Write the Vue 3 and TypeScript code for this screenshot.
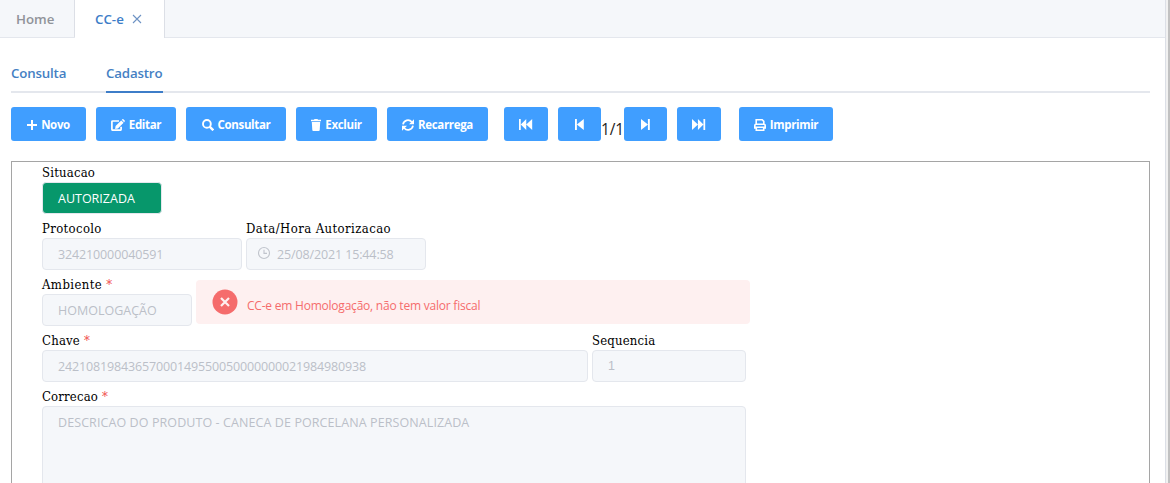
<script setup lang="ts">
interface Action {
  id: string
  label?: string
  icon: string
}

const edit: Action[] = [
  { id: 'novo', label: 'Novo', icon: 'plus' },
  { id: 'editar', label: 'Editar', icon: 'edit' },
  { id: 'consultar', label: 'Consultar', icon: 'search' },
  { id: 'excluir', label: 'Excluir', icon: 'trash' },
  { id: 'recarrega', label: 'Recarrega', icon: 'refresh' },
]
</script>

<template>
  <div class="window">
    <div class="page">
      <nav class="tabs">
        <div class="tab home"><span class="t-home">Home</span></div>
        <div class="tab active">
          <span class="t-cce">CC-e</span>
          <svg class="close" viewBox="0 0 10 10"><path d="M1 1l8 8M9 1l-8 8" /></svg>
        </div>
      </nav>
      <main class="content">
        <div class="subtabs">
          <div class="subtab consulta"><span>Consulta</span></div>
          <div class="subtab cadastro"><span>Cadastro</span></div>
        </div>
        <div class="toolbar">
          <button v-for="a in edit" :key="a.id" class="btn" :class="a.id">
            <svg v-if="a.icon === 'plus'" class="ico" viewBox="0 0 10 12"><path d="M5 1v10M0 6h10" fill="none" stroke="currentColor" stroke-width="2" /></svg>
            <svg v-else-if="a.icon === 'edit'" class="ico" viewBox="0 0 14 12">
              <path d="M8 2H1.8Q.9 2 .9 2.9v7.4q0 .9.9.9h7.4q.9 0 .9-.9V7.8" fill="none" stroke="currentColor" stroke-width="1.7" />
              <path d="M10.2 1.4l2.4 2.4-5.7 5.6-2.8.5.5-2.8zM10.8.8l.6-.5q.5-.4 1 0l1.3 1.3q.4.5 0 1l-.6.6z" fill="currentColor" />
            </svg>
            <svg v-else-if="a.icon === 'search'" class="ico" viewBox="0 0 12 12"><circle cx="4.9" cy="4.9" r="3.9" fill="none" stroke="currentColor" stroke-width="1.9" /><path d="M7.7 7.7l3.6 3.6" stroke="currentColor" stroke-width="2.4" /></svg>
            <svg v-else-if="a.icon === 'trash'" class="ico" viewBox="0 0 10 12"><path d="M0 .8h3L3.5 0h3l.5.8h3v1.5H0zM.8 3h8.4l-.5 8q0 1-1 1H2.3q-1 0-1-1z" fill="currentColor" /></svg>
            <svg v-else class="ico" viewBox="0 0 12 12">
              <path d="M1 5.3A5 5 0 0 1 9.8 3M11 6.7A5 5 0 0 1 2.2 9" fill="none" stroke="currentColor" stroke-width="1.7" />
              <path d="M12 .2v5H7zM0 11.8v-5h5z" fill="currentColor" />
            </svg>
            <span>{{ a.label }}</span>
          </button>
          <button class="btn first" aria-label="Primeiro"><svg class="ico" viewBox="0 0 12 10"><path d="M0 0h1.6v10H0zM6.6 0v10L1.6 5zM12 0v10L6.6 5z" fill="currentColor" /></svg></button>
          <button class="btn prev" aria-label="Anterior"><svg class="ico" viewBox="0 0 8 10"><path d="M0 0h1.7v10H0zM8 0v10L1.7 5z" fill="currentColor" /></svg></button>
          <span class="pager">1/1</span>
          <button class="btn next" aria-label="Próximo"><svg class="ico" viewBox="0 0 8 10"><path d="M8 0H6.3v10H8zM0 0v10L6.3 5z" fill="currentColor" /></svg></button>
          <button class="btn last" aria-label="Último"><svg class="ico" viewBox="0 0 12 10"><path d="M12 0h-1.6v10H12zM5.4 0v10l5-5zM0 0v10l5.4-5z" fill="currentColor" /></svg></button>
          <button class="btn imprimir">
            <svg class="ico" viewBox="0 0 12 12">
              <path d="M2.2 5V.8h6L9.8 2.4V5M2.2 9H.8V6.5Q.8 5.3 2 5.3h8q1.2 0 1.2 1.2V9H9.8M2.3 8.2h7.4v3H2.3z" fill="none" stroke="currentColor" stroke-width="1.6" />
            </svg>
            <span>Imprimir</span>
          </button>
        </div>
        <section class="panel">
          <div class="row">
            <div class="field w-sit"><label class="l-sit">Situacao</label><div class="input ok"><span class="v-aut">AUTORIZADA</span></div></div>
          </div>
          <div class="row">
            <div class="field w-pro"><label class="l-pro">Protocolo</label><div class="input"><span class="v-pro">324210000040591</span></div></div>
            <div class="field w-data">
              <label class="l-data">Data/Hora Autorizacao</label>
              <div class="input date">
                <svg class="clock" viewBox="0 0 14 14"><circle cx="7" cy="7" r="5.5" /><path d="M7 3.8V7.4H10" /></svg>
                <span class="v-data">25/08/2021 15:44:58</span>
              </div>
            </div>
          </div>
          <div class="row">
            <div class="field w-amb"><label class="l-amb">Ambiente <i>*</i></label><div class="input"><span class="v-amb">HOMOLOGAÇÃO</span></div></div>
            <div class="alert">
              <svg class="error" viewBox="0 0 26 26"><circle cx="13" cy="13" r="12.5" fill="#f56c6c" /><path d="M9 9l8 8M17 9l-8 8" stroke="#fef0f0" stroke-width="2.2" /></svg>
              <span class="v-alert">CC-e em Homologação, não tem valor fiscal</span>
            </div>
          </div>
          <div class="row">
            <div class="field w-cha"><label class="l-cha">Chave <i>*</i></label><div class="input"><span class="v-cha">24210819843657000149550050000000021984980938</span></div></div>
            <div class="field w-seq"><label class="l-seq">Sequencia</label><div class="input seq"><span>1</span></div></div>
          </div>
          <div class="row">
            <div class="field w-cor"><label class="l-cor">Correcao <i>*</i></label><div class="input area"><span class="v-cor">DESCRICAO DO PRODUTO - CANECA DE PORCELANA PERSONALIZADA</span></div></div>
          </div>
        </section>
      </main>
    </div>
  </div>
</template>

<style>
html, body { margin: 0; overflow: hidden; background: #fff; }
</style>

<style scoped>
* { box-sizing: border-box; }
.window { height: 483px; overflow: hidden; background: #f1f1f1; border-right: 2px solid #c1c1c1; padding-right: 2px; font-family: "Open Sans", "Noto Sans", sans-serif; }
.page { height: 483px; background: #fff; border-right: 1px solid #dcdfe6; }
span { white-space: nowrap; }
.tabs { display: flex; height: 38px; background: #f5f7fa; border-bottom: 1px solid #e4e7ed; }
.tab { height: 38px; display: flex; align-items: center; font-size: 13.3px; font-weight: 600; color: #909399; border-right: 1px solid #dcdfe6; }
.home { width: 75px; height: 37px; padding: 1px 0 0 16px; }
.active { width: 90px; padding-left: 20px; background: #fff; color: #3d7dc8; }
.close { width: 10px; height: 10px; margin-left: 8px; stroke: #6d93c4; stroke-width: 1.1; fill: none; }
.content { padding: 15px 15px 0 11px; }
.subtabs { display: flex; gap: 40px; height: 40px; border-bottom: 2px solid #e4e7ed; color: #457fc3; font-size: 13.3px; font-weight: 600; letter-spacing: -0.17px; }
.subtab { height: 40px; line-height: 40px; }
.consulta { width: 55px; }
.cadastro { width: 57px; border-bottom: 2px solid #3d7dc8; }
.toolbar { display: flex; margin-top: 14px; height: 34px; }
.btn { display: flex; align-items: center; justify-content: center; gap: 4px; height: 34px; padding: 0 0 1px; margin: 0 10px 0 0; border: 0; border-radius: 3px; background: #409eff; color: #fff; font: 700 11.5px "Open Sans", sans-serif; letter-spacing: -0.35px; }
.btn .ico { height: 12px; flex: none; position: relative; top: 1px; }
.btn span { position: relative; top: 1px; }
.novo { width: 75px; }
.editar { width: 80px; }
.consultar { width: 100px; }
.excluir { width: 81px; }
.recarrega { width: 101px; }
.first, .last { width: 44px; }
.first { margin-left: 6px; }
.prev { width: 43px; margin-right: 0; }
.next { width: 43px; }
.first .ico, .prev .ico, .next .ico, .last .ico { height: 11px; }
.imprimir { width: 94px; margin-left: 8px; }
.pager { width: 23px; text-align: center; font-size: 15.5px; line-height: 45px; letter-spacing: -0.1px; color: #222; }
.panel { margin-top: 20px; height: 340px; border: 1px solid #a5a5a5; padding-left: 30px; }
.row { display: flex; gap: 4px; height: 56px; }
.field { flex: none; }
label { display: block; height: 20px; line-height: 22px; font-family: "DejaVu Serif Condensed", "DejaVu Serif", serif; font-stretch: condensed; font-size: 13px; color: #000; white-space: nowrap; }
label i { color: #f04b4b; font-style: normal; }
.input { height: 32px; line-height: 31px; border: 1px solid #e4e7ed; border-radius: 4px; background: #f5f7fa; color: #bbbfc8; padding-left: 15px; font-size: 12.5px; }
.ok { background: #07976b; color: #fff; }
.date { display: flex; align-items: center; padding-left: 10px; }
.clock { width: 14px; height: 14px; margin-right: 6px; position: relative; top: -1px; fill: none; stroke: #c0c4cc; stroke-width: 1.1; }
.seq { font-family: "Liberation Sans", sans-serif; }
.area { height: 120px; }
.w-sit { width: 120px; }
.w-pro { width: 200px; }
.w-data { width: 180px; }
.w-amb { width: 150px; }
.w-cha { width: 546px; }
.w-seq { width: 154px; }
.w-cor { width: 704px; }
.l-sit, .l-seq, .l-cha { letter-spacing: 0.2px; }
.l-cor { letter-spacing: 0.17px; }
.l-pro { letter-spacing: 0.35px; }
.l-data, .l-amb { letter-spacing: 0.42px; }
.v-pro, .v-data { letter-spacing: -0.13px; }
.v-cha { letter-spacing: -0.15px; }
.v-cor { letter-spacing: 0.09px; }
.alert { display: flex; align-items: center; width: 554px; height: 44px; margin-top: 6px; padding-left: 16px; border-radius: 4px; background: #fef0f0; color: #f56c6c; font-size: 12px; }
.error { width: 26px; height: 26px; margin-right: 9px; }
.v-alert { padding-top: 7px; letter-spacing: -0.22px; }
</style>
